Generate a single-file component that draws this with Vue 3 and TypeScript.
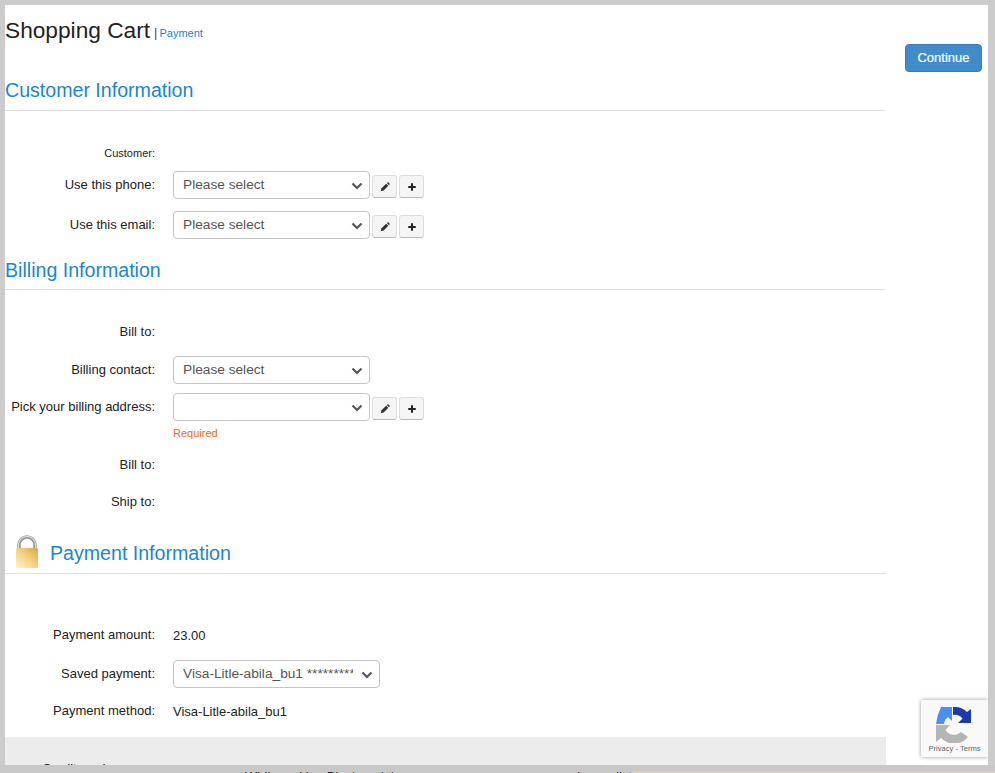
<template>
  <div class="screen">
    <div class="panel">
      <div class="main">
        <div class="page-title">
          <h1>Shopping Cart</h1>
          <span class="divider">|</span>
          <a class="crumb">Payment</a>
        </div>

        <h2 class="section customer">Customer Information</h2>
        <div class="customer-label">
          <label class="small">Customer:</label>
        </div>
        <div class="row phone">
          <label>Use this phone:</label>
          <div class="select">Please select<svg class="chev" viewBox="0 0 12 8"><path d="M1.5 1.5 6 6l4.5-4.5" /></svg></div>
          <div class="tools">
            <button class="tool"><svg viewBox="0 0 12 12"><path class="pen" d="M1 11 1.8 7.6 7.4 2 10 4.6 4.4 10.2Z" /><path class="pen" d="M8.2 1.2 9 .5a1 1 0 0 1 1.2 0l1.3 1.3a1 1 0 0 1 0 1.2l-.7.8Z" /></svg></button>
            <button class="tool"><svg viewBox="0 0 12 12"><path class="plus" d="M6 1.5v9M1.5 6h9" /></svg></button>
          </div>
        </div>
        <div class="row email">
          <label>Use this email:</label>
          <div class="select">Please select<svg class="chev" viewBox="0 0 12 8"><path d="M1.5 1.5 6 6l4.5-4.5" /></svg></div>
          <div class="tools">
            <button class="tool"><svg viewBox="0 0 12 12"><path class="pen" d="M1 11 1.8 7.6 7.4 2 10 4.6 4.4 10.2Z" /><path class="pen" d="M8.2 1.2 9 .5a1 1 0 0 1 1.2 0l1.3 1.3a1 1 0 0 1 0 1.2l-.7.8Z" /></svg></button>
            <button class="tool"><svg viewBox="0 0 12 12"><path class="plus" d="M6 1.5v9M1.5 6h9" /></svg></button>
          </div>
        </div>

        <h2 class="section billing">Billing Information</h2>
        <div class="row plain bill-first"><label>Bill to:</label></div>
        <div class="row contact">
          <label>Billing contact:</label>
          <div class="select">Please select<svg class="chev" viewBox="0 0 12 8"><path d="M1.5 1.5 6 6l4.5-4.5" /></svg></div>
        </div>
        <div class="row address">
          <label>Pick your billing address:</label>
          <div class="select"><svg class="chev" viewBox="0 0 12 8"><path d="M1.5 1.5 6 6l4.5-4.5" /></svg></div>
          <div class="tools">
            <button class="tool"><svg viewBox="0 0 12 12"><path class="pen" d="M1 11 1.8 7.6 7.4 2 10 4.6 4.4 10.2Z" /><path class="pen" d="M8.2 1.2 9 .5a1 1 0 0 1 1.2 0l1.3 1.3a1 1 0 0 1 0 1.2l-.7.8Z" /></svg></button>
            <button class="tool"><svg viewBox="0 0 12 12"><path class="plus" d="M6 1.5v9M1.5 6h9" /></svg></button>
          </div>
        </div>
        <div class="required">Required</div>
        <div class="row plain bill-second"><label>Bill to:</label></div>
        <div class="row plain ship"><label>Ship to:</label></div>

        <h2 class="section payment">
          <svg class="lock" viewBox="0 0 26 34">
            <defs>
              <linearGradient id="lockBody" x1="0" y1="1" x2="1" y2="0">
                <stop offset="0" stop-color="#fff4c4" />
                <stop offset="0.5" stop-color="#f4d384" />
                <stop offset="1" stop-color="#d8a645" />
              </linearGradient>
            </defs>
            <path d="M5 15V10a8 8 0 0 1 16 0V15" fill="none" stroke="#9a9a9a" stroke-width="3.6" />
            <path d="M4.4 15V10a8.6 8.6 0 0 1 17.2 0V15" fill="none" stroke="#dedede" stroke-width="1.2" />
            <rect x="2" y="13" width="22" height="20" rx="1.5" fill="url(#lockBody)" />
          </svg>
          Payment Information
        </h2>
        <div class="row value amount">
          <label>Payment amount:</label>
          <span>23.00</span>
        </div>
        <div class="row saved">
          <label>Saved payment:</label>
          <div class="select wide"><span class="clip">Visa-Litle-abila_bu1 ************1111</span><svg class="chev" viewBox="0 0 12 8"><path d="M1.5 1.5 6 6l4.5-4.5" /></svg></div>
        </div>
        <div class="row value method">
          <label>Payment method:</label>
          <span>Visa-Litle-abila_bu1</span>
        </div>
        <div class="credit">
          <div class="credit-text">Credit card:</div>
        </div>
      </div>

      <div class="side">
        <button class="continue">Continue</button>
      </div>

      <div class="recaptcha">
        <svg viewBox="0 0 36 36">
          <path d="M0 17Q1 8 5 0H16V14L12 10A10 10 0 0 0 8 17Z" fill="#4a90f0" />
          <path d="M17 0A18 18 0 0 1 31 5L35 2V16H22L26.5 11.5A10 10 0 0 0 17 8Z" fill="#1c3aa9" />
          <path d="M0 18H14L9.5 23A10 10 0 0 0 25 25L32 30A18 18 0 0 1 5 31L0 35Z" fill="#b5b5b5" />
        </svg>
        <div class="recaptcha-links">Privacy - Terms</div>
      </div>
    </div>
    <div class="under">
      <span class="under-text">While making Black and the</span>
      <span class="under-text second">Lower list</span>
      <div class="under-tan"></div>
    </div>
  </div>
</template>

<script setup lang="ts">
</script>

<style>
html,
body {
  margin: 0;
  background: #cccccc;
}
</style>

<style scoped>
.screen {
  position: relative;
  width: 995px;
  height: 773px;
  overflow: hidden;
  background: #cccccc;
  font-family: "Liberation Sans", Arial, sans-serif;
  font-size: 13px;
  color: #222;
}
.panel {
  position: relative;
  display: flex;
  margin: 5px 0 0 5px;
  width: 983px;
  height: 760px;
  overflow: hidden;
  background: #fff;
}
.main {
  width: 881px;
  flex: none;
}
.side {
  flex: 1;
  padding: 39px 6px 0 19px;
}
.page-title {
  display: flex;
  align-items: flex-start;
  height: 50px;
  padding-top: 10px;
  box-sizing: border-box;
}
h1 {
  margin: 0;
  font-size: 22.7px;
  font-weight: 400;
  line-height: 30px;
  color: #222;
}
.divider {
  margin: 10px 0 0 4px;
  color: #7a1f8a;
  font-size: 13px;
  line-height: 15px;
}
.crumb {
  margin: 12px 0 0 2px;
  color: #1a86cf;
  font-size: 11px;
  line-height: 13px;
}
.section {
  display: flex;
  align-items: flex-end;
  margin: 0;
  font-size: 19.6px;
  font-weight: 400;
  line-height: 24px;
  color: #1a86cf;
  border-bottom: 1px solid #e3e3e3;
}
.customer {
  margin-top: 23px;
  padding-bottom: 8px;
}
.billing {
  margin-top: 19px;
  padding-bottom: 7px;
}
.payment {
  margin-top: 26px;
  padding-bottom: 8px;
}
.lock {
  width: 26px;
  height: 34px;
  margin: 0 10px -4px 9px;
}
.row {
  display: flex;
  align-items: center;
}
.row label {
  width: 150px;
  flex: none;
  padding-bottom: 2px;
  text-align: right;
}
.small {
  display: block;
  width: 150px;
  font-size: 11px;
  text-align: right;
}
.customer-label {
  padding-top: 36px;
  line-height: 12px;
}
.select {
  position: relative;
  box-sizing: border-box;
  width: 197px;
  height: 28px;
  margin-left: 18px;
  padding-left: 9px;
  line-height: 25px;
  font-size: 13.7px;
  color: #555;
  background: #fff;
  border: 1px solid #c4c4c4;
  border-radius: 4px;
}
.select.wide {
  width: 207px;
}
.clip {
  display: block;
  width: 170px;
  overflow: hidden;
  white-space: nowrap;
}
.chev {
  position: absolute;
  right: 6px;
  top: 10px;
  width: 12px;
  height: 8px;
  fill: none;
  stroke: #555;
  stroke-width: 2.2;
}
.tools {
  display: flex;
  gap: 2px;
  margin-left: 2px;
  margin-top: 3px;
}
.tool {
  display: flex;
  align-items: center;
  justify-content: center;
  box-sizing: border-box;
  width: 25px;
  height: 23px;
  padding: 0;
  background: #f5f5f5;
  border: 1px solid #ddd;
  border-bottom-color: #bbb;
  border-radius: 3px;
}
.tool svg {
  width: 10px;
  height: 10px;
}
.pen {
  fill: #333;
}
.plus {
  fill: none;
  stroke: #222;
  stroke-width: 2.4;
}
.phone {
  margin-top: 12px;
}
.email {
  margin-top: 12px;
}
.bill-first {
  margin-top: 35px;
  height: 14px;
}
.contact {
  margin-top: 17px;
}
.address {
  margin-top: 9px;
}
.required {
  margin: 5px 0 0 168px;
  font-size: 11px;
  line-height: 14px;
  color: #f26a14;
}
.bill-second {
  margin-top: 18px;
  height: 14px;
}
.ship {
  margin-top: 23px;
  height: 14px;
}
.amount {
  margin-top: 54px;
  height: 14px;
}
.amount span,
.method span {
  margin-left: 18px;
}
.saved {
  margin-top: 18px;
}
.method {
  margin-top: 16px;
  height: 14px;
}
.credit {
  height: 60px;
  margin-top: 19px;
  background: #ececec;
}
.credit-text {
  padding: 24px 0 0 37px;
  font-size: 13px;
}
.continue {
  width: 77px;
  height: 28px;
  padding: 0 0 2px;
  font-family: inherit;
  font-size: 13px;
  font-weight: 400;
  -webkit-text-stroke: 0.2px #fff;
  color: #fff;
  background: #428bca;
  border: 1px solid #357ebd;
  border-radius: 4px;
}
.recaptcha {
  position: absolute;
  right: 0;
  top: 695px;
  width: 67px;
  height: 57px;
  background: #f9f9f9;
  box-shadow: 0 0 4px rgba(0, 0, 0, 0.4);
  border-radius: 2px 0 0 2px;
  text-align: center;
}
.recaptcha svg {
  display: block;
  width: 36px;
  height: 36px;
  padding: 7px 0 0 15px;
  box-sizing: content-box;
}
.recaptcha-links {
  font-size: 7.6px;
  line-height: 10px;
  color: #666;
  margin-top: 1px;
}
.under {
  position: relative;
  height: 8px;
  overflow: hidden;
  background: #c8c8c8;
}
.under-text {
  position: absolute;
  left: 245px;
  top: 4px;
  font-size: 13px;
  white-space: nowrap;
}
.under-text.second {
  left: 577px;
}
.under-tan {
  position: absolute;
  left: 633px;
  right: 0;
  top: 6px;
  height: 2px;
  background: #dcd3ac;
}
</style>
